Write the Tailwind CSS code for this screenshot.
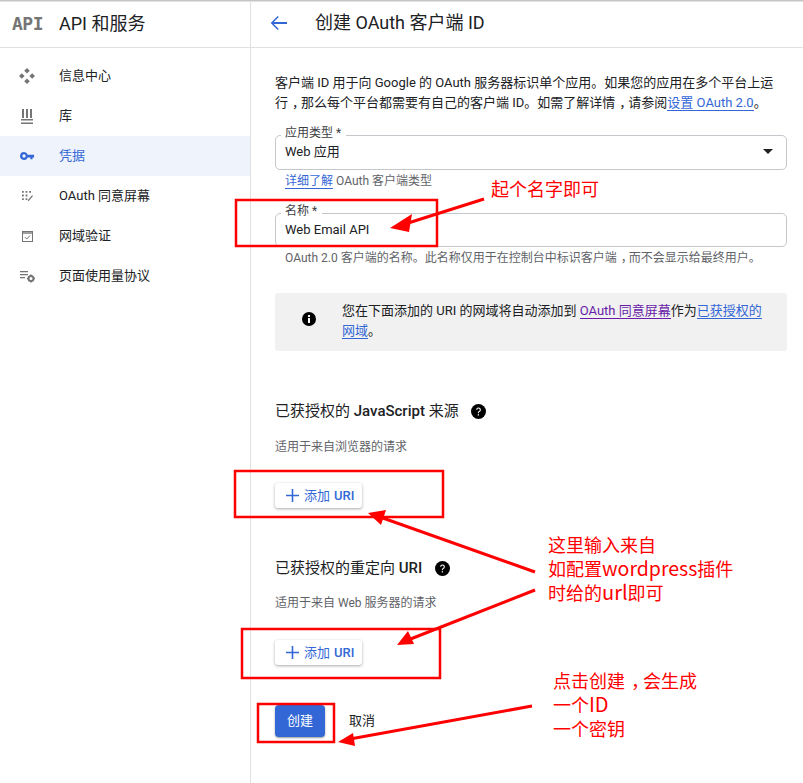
<!DOCTYPE html>
<html lang="en">
<head>
<meta charset="UTF-8"/>
<title>创建 OAuth 客户端 ID</title>
<script src="https://cdn.jsdelivr.net/npm/@tailwindcss/browser@4"></script>
</head>
<body class="relative w-[803px] h-[783px] overflow-hidden bg-white font-['Roboto','Noto_Sans_CJK_SC',sans-serif] text-[13px] leading-5 text-[#202124]">
<div class="h-[2px] bg-gradient-to-b from-[#b8b8b8] to-[#f0f0f0]"></div>
<div class="flex h-[781px]">
    <!-- sidebar -->
    <aside class="w-[251px] shrink-0 border-r border-[#e0e0e0]">
        <div class="flex items-center h-[46px] pb-[2px] border-b border-[#e0e0e0]">
            <span class="w-[59px] pl-[12px] font-['DejaVu_Sans_Mono',monospace] font-bold text-[18px] tracking-[-0.5px] text-[#757575]">API</span>
            <span class="text-[18px] text-[#202124]">API 和服务</span>
        </div>
        <nav class="pt-[8px]">
            <div class="flex items-center h-10">
                <span class="w-[59px] pl-[19px]"><svg class="w-4 h-4" viewBox="0 0 16 16" fill="#757575"><path d="M8 0 10.800 2.800 8 5.600 5.200 2.800zM8 10.400 10.800 13.200 8 16 5.200 13.200zM2.800 5.200 5.600 8 2.800 10.800 0 8zM13.200 5.200 16 8 13.200 10.800 10.400 8z"/></svg></span>
                <span>信息中心</span>
            </div>
            <div class="flex items-center h-10">
                <span class="w-[59px] pl-[21px]"><svg class="w-[12px] h-[15px]" viewBox="0 0 12 15" fill="#757575"><path d="M1 0h2v9H1zM5 0h2v9H5zM9 0h2v9H9zM0 10h12v1.500H0zM0 13.500h12V15H0z"/></svg></span>
                <span>库</span>
            </div>
            <div class="flex items-center h-10 bg-[#eef3fc] text-[#3367d6]">
                <span class="w-[59px] pl-[20px]"><svg class="w-[15px] h-[10px]" viewBox="0 0 16 10" fill="#3367d6"><path d="M4.300.8a4.200 4.200 0 1 0 3.900 5.700H11v2h2.400v-2H15V3.700H8.200A4.200 4.200 0 0 0 4.300.8zm0 2.400a1.800 1.800 0 1 1 0 3.600 1.800 1.800 0 0 1 0-3.600z"/></svg></span>
                <span>凭据</span>
            </div>
            <div class="flex items-center h-10">
                <span class="w-[59px] pl-[22px]"><svg class="w-[11px] h-[11px]" viewBox="0 0 11 11" fill="#757575"><path d="M0 0h1.800v1.800H0zM3.600 0h1.800v1.800H3.600zM7.200 0H9v1.800H7.200zM0 3.600h1.800v1.800H0zM3.600 3.600h1.800v1.800H3.600zM0 7.200h1.800V9H0zM3.600 7.200h1.800V9H3.600zM6 9l4-4.800 1 .8-4 4.800-1.300.4z"/></svg></span>
                <span>OAuth 同意屏幕</span>
            </div>
            <div class="flex items-center h-10">
                <span class="w-[59px] pl-[22px]"><svg class="w-[11px] h-[11px]" viewBox="0 0 11 11" fill="none" stroke="#757575"><rect x=".5" y=".5" width="10" height="10"/><path d="M.5 2h10" stroke-width="1.400"/><path d="M3 6.200 4.800 8 8 4.500"/></svg></span>
                <span>网域验证</span>
            </div>
            <div class="flex items-center h-10">
                <span class="w-[59px] pl-[20px]"><svg class="w-[16px] h-[13px]" viewBox="0 0 16 13" fill="#757575"><path d="M0 1h8v1.200H0zM0 4h8v1.200H0zM0 7h5v1.200H0z"/><circle cx="11" cy="8.500" r="2.500" fill="none" stroke="#757575" stroke-width="2"/><path d="M10.200 4.500h1.600v1.500h-1.600zM10.200 11h1.600v1.500h-1.600zM7 7.700h1.500v1.600H7zM13.500 7.700H15v1.600h-1.500z"/></svg></span>
                <span>页面使用量协议</span>
            </div>
        </nav>
    </aside>

    <main class="flex-1 min-w-0">
        <header class="flex items-center h-[46px] pb-[4px] border-b border-[#e0e0e0]">
            <svg class="ml-[19px] w-[18px] h-[18px]" viewBox="0 0 18 18" fill="#3367d6"><path d="M17 8H3.800l5-5L7.700 1.900 .7 9l7 7 1.100-1.100-5-4.900H17z"/></svg>
            <h1 class="ml-[27px] text-[18px]">创建 OAuth 客户端 ID</h1>
        </header>

        <div class="pl-[24px] pr-[16px] pt-[25px]">
            <p>客户端 ID 用于向 Google 的 OAuth 服务器标识单个应用。如果您的应用在多个平台上运<br>行<span class="inline-block translate-x-[4px]">，</span>那么每个平台都需要有自己的客户端 ID。如需了解详情<span class="inline-block translate-x-[4px]">，</span>请参阅<a class="text-[#3367d6] border-b border-[#3367d6]">设置 OAuth 2.0</a>。</p>

            <div class="relative mt-[22px] flex items-center justify-between h-[35px] pl-[9px] pr-[13px] pb-[2px] border border-[#c4c7cc] rounded-[5px]">
                <span class="absolute -top-[12px] left-[5px] bg-white pl-[4px] pr-[5px] text-[12px] leading-[18px] text-[#3c4043]">应用类型 *</span>
                <span>Web 应用</span>
                <span class="w-0 h-0 border-x-[5px] border-x-transparent border-t-[5px] border-t-[#202124]"></span>
            </div>
            <p class="mt-[2px] pl-[10px] text-[12px] leading-[18px] text-[#5f6368]"><a class="text-[#3367d6] border-b border-[#3367d6]">详细了解</a> OAuth 客户端类型</p>

            <div class="relative mt-[23px] flex items-center h-[34px] pl-[9px] border border-[#c4c7cc] rounded-[5px]">
                <span class="absolute -top-[12px] left-[5px] bg-white pl-[4px] pr-[5px] text-[12px] leading-[18px] text-[#3c4043]">名称 *</span>
                <span>Web Email API</span>
            </div>
            <p class="mt-[2px] pl-[10px] text-[12px] leading-[18px] text-[#5f6368]">OAuth 2.0 客户端的名称。此名称仅用于在控制台中标识客户端<span class="inline-block translate-x-[4px]">，</span>而不会显示给最终用户。</p>

            <div class="mt-[26px] flex h-[58px] bg-[#f1f1f1] rounded-[3px]">
                <span class="w-[67px] shrink-0 pl-[27px] pt-[19px]"><svg class="w-[14px] h-[14px]" viewBox="0 0 14 14"><circle cx="7" cy="7" r="7" fill="#000"/><path d="M6 6h2v5H6zM6 3h2v2H6z" fill="#fff"/></svg></span>
                <p class="pt-[8px] pr-[20px]">您在下面添加的 URI 的网域将自动添加到 <a class="text-[#681da8] border-b border-[#681da8]">OAuth 同意屏幕</a>作为<a class="text-[#3367d6] border-b border-[#3367d6]">已获授权的网域</a>。</p>
            </div>

            <div class="mt-[50px] flex items-center h-5">
                <h2 class="text-[15px]">已获授权的 <span class="font-medium">JavaScript</span> 来源</h2>
                <svg class="ml-[12px] w-[15px] h-[15px]" viewBox="0 0 14 14"><circle cx="7" cy="7" r="7" fill="#000"/><path d="M4.800 5.400a2.200 2.200 0 1 1 3.400 1.900c-.7.400-.9.700-.9 1.300H6.400c0-1 .3-1.500 1.100-2 .5-.3.700-.6.700-1a1.200 1.200 0 0 0-2.400-.2zM6.300 9.500h1.200v1.200H6.300z" fill="#fff"/></svg>
            </div>
            <p class="mt-[17px] text-[12px] leading-[18px] text-[#5f6368]">适用于来自浏览器的请求</p>
            <button class="mt-[27px] flex items-center h-[25px] w-[87px] pl-[11px] rounded-[3px] bg-white shadow-[0_1px_3px_rgba(60,64,67,0.45)] text-[#3367d6] text-[13px]"><svg class="w-[13px] h-[13px] mr-[5px]" viewBox="0 0 13 13" fill="#3367d6"><path d="M5.700 0h1.600v5.700H13v1.600H7.300V13H5.700V7.300H0V5.700h5.700z"/></svg>添加 <span class="ml-1 font-medium">URI</span></button>

            <div class="mt-[50px] flex items-center h-5">
                <h2 class="text-[15px]">已获授权的重定向 <span class="font-medium">URI</span></h2>
                <svg class="ml-[13px] w-[15px] h-[15px]" viewBox="0 0 14 14"><circle cx="7" cy="7" r="7" fill="#000"/><path d="M4.800 5.400a2.200 2.200 0 1 1 3.400 1.900c-.7.400-.9.700-.9 1.300H6.400c0-1 .3-1.500 1.100-2 .5-.3.700-.6.700-1a1.200 1.200 0 0 0-2.400-.2zM6.300 9.500h1.200v1.200H6.300z" fill="#fff"/></svg>
            </div>
            <p class="mt-[16px] text-[12px] leading-[18px] text-[#5f6368]">适用于来自 Web 服务器的请求</p>
            <button class="mt-[28px] flex items-center h-[25px] w-[87px] pl-[11px] rounded-[3px] bg-white shadow-[0_1px_3px_rgba(60,64,67,0.45)] text-[#3367d6] text-[13px]"><svg class="w-[13px] h-[13px] mr-[5px]" viewBox="0 0 13 13" fill="#3367d6"><path d="M5.700 0h1.600v5.700H13v1.600H7.300V13H5.700V7.300H0V5.700h5.700z"/></svg>添加 <span class="ml-1 font-medium">URI</span></button>

            <div class="mt-[40px] flex items-center">
                <button class="w-[50px] h-[32px] rounded-[4px] bg-[#3367d6] text-white text-[13px] shadow-[0_1px_2px_rgba(60,64,67,0.5)]">创建</button>
                <span class="ml-[24px]">取消</span>
            </div>
        </div>
    </main>
</div>

<!-- red annotations -->
<svg class="absolute inset-0 w-[803px] h-[783px]" viewBox="0 0 803 783" fill="none" stroke="#ff0000" stroke-width="2.500">
    <rect x="236" y="200" width="201" height="46"/>
    <rect x="235" y="471" width="208" height="46"/>
    <rect x="242" y="629" width="198" height="49"/>
    <rect x="258" y="704" width="76" height="38"/>
    <path d="M484 199 405 224" stroke-width="3"/>
    <path d="M390 228 412 214 409 232z" fill="#ff0000" stroke="none"/>
    <path d="M535 572 380 517" stroke-width="3"/>
    <path d="M368 513 386 510 381 525z" fill="#ff0000" stroke="none"/>
    <path d="M535 590 408 640" stroke-width="3"/>
    <path d="M397 645 408 631 414 644z" fill="#ff0000" stroke="none"/>
    <path d="M532 706 350 739" stroke-width="3"/>
    <path d="M338 742 353 733 355 746z" fill="#ff0000" stroke="none"/>
</svg>
<div class="absolute left-[491px] top-[176px] font-['Noto_Sans_CJK_SC',sans-serif] text-[18px] leading-6 text-[#ff0000]">起个名字即可</div>
<div class="absolute left-[548px] top-[532px] font-['Noto_Sans_CJK_SC',sans-serif] text-[18px] leading-6 text-[#ff0000]">这里输入来自<br>如配置<span class="text-[19.5px]">wordpress</span>插件<br>时给的<span class="text-[20px]">url</span>即可</div>
<div class="absolute left-[553px] top-[668px] font-['Noto_Sans_CJK_SC',sans-serif] text-[18px] leading-6 text-[#ff0000]">点击创建<span class="inline-block translate-x-[6px]">，</span>会生成<br>一个<span class="text-[20px]">ID</span><br>一个密钥</div>
</body>
</html>
